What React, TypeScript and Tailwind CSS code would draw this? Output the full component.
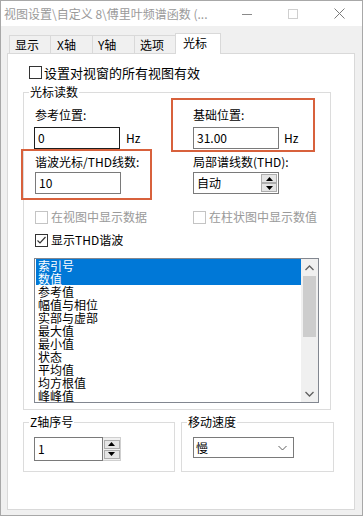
import React from "react";

function Check({ checked = false, disabled = false }: { checked?: boolean; disabled?: boolean }) {
  return (
    <div
      className={
        "w-[13px] h-[13px] shrink-0 bg-white border " +
        (disabled ? "border-[#c4c4c4]" : "border-[#333333]")
      }
    >
      {checked && (
        <svg width="11" height="11" viewBox="0 0 11 11" className="block">
          <path d="M1.5 5.5 L4 8 L9.5 2" fill="none" stroke="#333333" strokeWidth="1.2" />
        </svg>
      )}
    </div>
  );
}

function Group({ label, className, children }: { label: string; className: string; children?: React.ReactNode }) {
  return (
    <div className={"relative border border-[#dcdcdc] " + className}>
      <span className="absolute left-[5px] top-[-8px] bg-white px-[1px] text-[12px] leading-[14px] text-black">
        {label}
      </span>
      {children}
    </div>
  );
}

function SpinBtn({ up }: { up: boolean }) {
  return (
    <div className="w-[16px] h-[9px] border border-[#adadad] bg-[#e5e5e5] flex items-center justify-center">
      <svg width="7" height="4" viewBox="0 0 7 4" className="block">
        {up ? <path d="M0 4 L3.5 0 L7 4 Z" fill="#000" /> : <path d="M0 0 L3.5 4 L7 0 Z" fill="#000" />}
      </svg>
    </div>
  );
}

const items = [
  "索引号",
  "数值",
  "参考值",
  "幅值与相位",
  "实部与虚部",
  "最大值",
  "最小值",
  "状态",
  "平均值",
  "均方根值",
  "峰峰值",
];

export default function App() {
  return (
    <div className="w-[363px] h-[516px] bg-[#f0f0f0] border border-[#a8a8a8] flex flex-col font-['Noto_Sans_CJK_SC',sans-serif] text-black overflow-hidden">
      {/* Title bar */}
      <div className="h-[25px] bg-white flex items-center shrink-0">
        <span className="pl-[3px] text-[12px] leading-[16px] text-[#9a9a9a] whitespace-nowrap">
          视图设置\自定义 8\傅里叶频谱函数 (...
        </span>
        <div className="ml-auto flex h-full">
          <div className="w-[46px] flex items-center justify-center">
            <svg width="10" height="10" viewBox="0 0 10 10">
              <path d="M0 5.5 H10" stroke="#8a8a8a" strokeWidth="1" />
            </svg>
          </div>
          <div className="w-[46px] flex items-center justify-center">
            <svg width="10" height="10" viewBox="0 0 10 10">
              <rect x="0.5" y="0.5" width="9" height="9" fill="none" stroke="#cfcfcf" strokeWidth="1" />
            </svg>
          </div>
          <div className="w-[46px] flex items-center justify-center">
            <svg width="11" height="11" viewBox="0 0 11 11">
              <path d="M0.5 0.5 L10.5 10.5 M10.5 0.5 L0.5 10.5" stroke="#7a7a7a" strokeWidth="1" />
            </svg>
          </div>
        </div>
      </div>

      {/* Tabs */}
      <div className="mt-[7px] pl-[8px] flex items-end -mb-px relative z-10 shrink-0">
        <div className="w-[42px] h-[18px] mb-px border-l border-t border-r border-[#d9d9d9] pl-[5px] pt-[1px] text-[12px] leading-[16px]">
          显示
        </div>
        <div className="w-[43px] h-[18px] mb-px -ml-px border-l border-t border-r border-[#d9d9d9] pl-[6px] pt-[1px] text-[12px] leading-[16px]">
          X轴
        </div>
        <div className="w-[43px] h-[18px] mb-px -ml-px border-l border-t border-r border-[#d9d9d9] pl-[5px] pt-[1px] text-[12px] leading-[16px]">
          Y轴
        </div>
        <div className="w-[42px] h-[18px] mb-px -ml-px border-l border-t border-r border-[#d9d9d9] pl-[5px] pt-[1px] text-[12px] leading-[16px]">
          选项
        </div>
        <div className="w-[46px] h-[21px] -ml-px border-l border-t border-r border-[#d9d9d9] bg-white pl-[7px] pt-[1px] text-[12px] leading-[16px]">
          光标
        </div>
      </div>

      {/* Panel */}
      <div className="ml-[6px] w-[348px] h-[457px] border border-[#d9d9d9] bg-white pl-[15px] shrink-0">
        {/* Top checkbox */}
        <div className="mt-[12px] ml-[6px] h-[13px] flex items-center">
          <Check />
          <span className="ml-[2px] text-[13px] leading-[16px] whitespace-nowrap">设置对视窗的所有视图有效</span>
        </div>

        {/* Cursor readout group */}
        <Group label="光标读数" className="mt-[13px] w-[308px] pl-[10px] pt-[14px] pb-[6px]">
          <div className="flex text-[12px] leading-[16px]">
            <div className="w-[159px] pl-[1px]">参考位置:</div>
            <div>基础位置:</div>
          </div>
          <div className="mt-[4px] flex">
            <div className="w-[159px] flex items-center">
              <div className="w-[86px] h-[22px] border border-[#1e1e1e] pl-[3px] text-[12px] leading-[20px]">0</div>
              <span className="ml-[6px] text-[12px] leading-[16px]">Hz</span>
            </div>
            <div className="flex items-center">
              <div className="w-[86px] h-[22px] border border-[#7a7a7a] pl-[3px] text-[12px] leading-[20px]">31.00</div>
              <span className="ml-[5px] text-[12px] leading-[16px]">Hz</span>
            </div>
          </div>
          <div className="mt-[5px] flex text-[12px] leading-[16px]">
            <div className="w-[159px] pl-[1px] whitespace-nowrap">谐波光标/THD线数:</div>
            <div className="whitespace-nowrap">局部谱线数(THD):</div>
          </div>
          <div className="mt-[2px] flex">
            <div className="w-[159px] pl-[1px]">
              <div className="w-[86px] h-[22px] border border-[#7a7a7a] pl-[3px] text-[12px] leading-[20px]">10</div>
            </div>
            <div className="w-[86px] h-[22px] border border-[#7a7a7a] flex items-center">
              <span className="pl-[3px] text-[12px] leading-[20px] flex-1">自动</span>
              <div className="mr-[1px] flex flex-col">
                <SpinBtn up />
                <SpinBtn up={false} />
              </div>
            </div>
          </div>
          <div className="mt-[15px] flex text-[12px] leading-[16px] text-[#9a9a9a]">
            <div className="w-[159px] pl-[1px] flex items-center">
              <Check disabled />
              <span className="ml-[3px] whitespace-nowrap">在视图中显示数据</span>
            </div>
            <div className="flex items-center">
              <Check disabled />
              <span className="ml-[3px] whitespace-nowrap">在柱状图中显示数值</span>
            </div>
          </div>
          <div className="mt-[7px] pl-[1px] flex items-center text-[12px] leading-[16px]">
            <Check checked />
            <span className="ml-[3px]">显示THD谐波</span>
          </div>
          <div className="mt-[10px] w-[285px] h-[145px] border border-[#828790] bg-white flex">
            <div className="w-[266px] pl-[1px] overflow-hidden">
              {items.map((it, i) => (
                <div
                  key={it}
                  className={
                    "h-[13px] pl-[2px] text-[12px] leading-[13px] whitespace-nowrap " +
                    (i < 2 ? "bg-[#0078d7] text-white" : "text-black")
                  }
                >
                  {it}
                </div>
              ))}
            </div>
            <div className="w-[17px] bg-[#f0f0f0] flex flex-col items-center">
              <div className="h-[17px] flex items-center justify-center">
                <svg width="9" height="6" viewBox="0 0 9 6">
                  <path d="M0.5 5 L4.5 1 L8.5 5" fill="none" stroke="#606060" strokeWidth="1.3" />
                </svg>
              </div>
              <div className="w-[13px] h-[61px] bg-[#cdcdcd]" />
              <div className="flex-1" />
              <div className="h-[17px] flex items-center justify-center">
                <svg width="9" height="6" viewBox="0 0 9 6">
                  <path d="M0.5 1 L4.5 5 L8.5 1" fill="none" stroke="#606060" strokeWidth="1.3" />
                </svg>
              </div>
            </div>
          </div>

          {/* Annotation boxes */}
          <div className="absolute left-[147px] top-[5px] w-[144px] h-[54px] border-2 border-[#d8613c]" />
          <div className="absolute left-[-3px] top-[56px] w-[131px] h-[51px] border-2 border-[#d8613c]" />
        </Group>

        {/* Bottom groups */}
        <div className="mt-[12px] flex gap-[6px]">
          <Group label="Z轴序号" className="w-[152px] h-[50px] pl-[10px] pt-[14px]">
            <div className="flex h-[24px]">
              <div className="w-[69px] h-[24px] border border-[#7a7a7a] pl-[3px] text-[12px] leading-[22px]">1</div>
              <div className="w-[18px] h-[24px] border border-[#cfcfcf] border-l-0 bg-[#f0f0f0] flex flex-col items-center justify-center gap-[1px]">
                <SpinBtn up />
                <SpinBtn up={false} />
              </div>
            </div>
          </Group>
          <Group label="移动速度" className="w-[153px] h-[50px] pl-[11px] pt-[14px]">
            <div className="w-[101px] h-[21px] border border-[#7a7a7a] flex items-center">
              <span className="pl-[2px] text-[12px] leading-[19px] flex-1">慢</span>
              <svg width="9" height="6" viewBox="0 0 9 6" className="mr-[6px]">
                <path d="M0.5 1 L4.5 5 L8.5 1" fill="none" stroke="#606060" strokeWidth="1" />
              </svg>
            </div>
          </Group>
        </div>
      </div>
    </div>
  );
}
